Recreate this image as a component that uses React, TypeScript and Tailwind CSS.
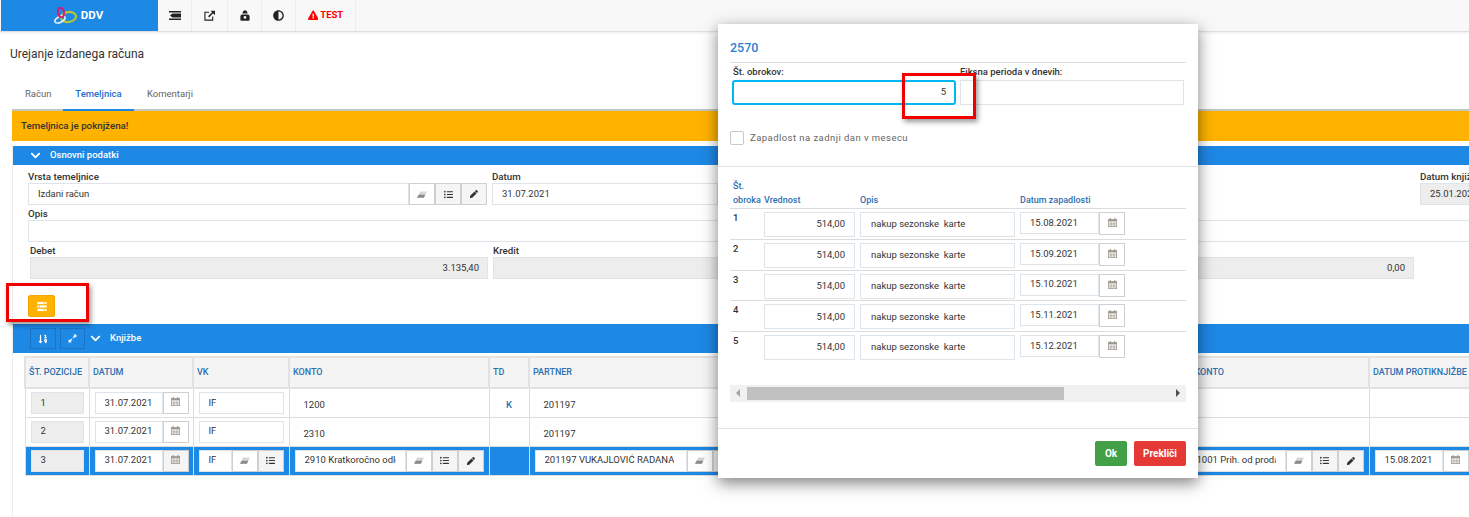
import React from 'react';
import {
  FaAdjust,
  FaChevronDown,
  FaExclamationTriangle,
  FaExpandAlt,
  FaListUl,
  FaPen,
  FaSortNumericDown,
} from 'react-icons/fa';

const Eraser = ({ className = '' }: { className?: string }) => (
  <svg viewBox="0 0 16 10" className={className} fill="currentColor">
    <path d="M5 0h11l-5 10H0z" opacity="0.35" />
    <path d="M2.8 5.5h10.4L11 10H0z" />
  </svg>
);

const Calendar = () => (
  <svg viewBox="0 0 12 12" className="w-[9px] h-[9px] mb-[2px]" fill="none" stroke="#9a958a">
    <rect x="0.5" y="2" width="11" height="9.5" strokeWidth="1" />
    <path d="M0.5 3.5h11" strokeWidth="2" />
    <path d="M4 5v6M8 5v6M1 7h10M1 9.2h10" strokeWidth="0.8" />
    <path d="M3 0v3M9 0v3" strokeWidth="1.4" />
  </svg>
);

const Logo = () => (
  <svg viewBox="0 0 24 17" className="w-[24px] h-[17px]" fill="none">
    <ellipse cx="15.5" cy="10" rx="7.5" ry="5" stroke="#b4c632" strokeWidth="2.2" transform="rotate(-8 15.5 10)" />
    <ellipse cx="7" cy="12.5" rx="5.5" ry="2.8" stroke="#e3f0fb" strokeWidth="1.6" transform="rotate(-28 7 12.5)" />
    <ellipse cx="8" cy="5.5" rx="3" ry="4.8" stroke="#d81b72" strokeWidth="2" transform="rotate(-10 8 5.5)" />
  </svg>
);

const Sliders = () => (
  <svg viewBox="0 0 12 12" className="w-[12px] h-[11px]" fill="#fff">
    <rect x="1" y="1" width="10" height="2.4" />
    <rect x="1" y="4.8" width="10" height="2.4" />
    <rect x="1" y="8.6" width="10" height="2.4" />
    <rect x="8" y="0.5" width="0.8" height="3" fill="#ffb300" />
    <rect x="3" y="4.5" width="0.8" height="3" fill="#ffb300" />
    <rect x="8" y="8.3" width="0.8" height="3" fill="#ffb300" />
  </svg>
);

const BarsIcon = () => (
  <svg viewBox="0 0 12 9" className="w-[12px] h-[9px]" fill="#222">
    <rect x="0" y="0" width="12" height="1.5" />
    <rect x="0" y="7.5" width="12" height="1.5" />
    <path d="M3.5 2.5H12v4H3.5L1 4.5z" />
  </svg>
);

const LinkIcon = () => (
  <svg viewBox="0 0 12 12" className="w-[11px] h-[11px]" fill="none" stroke="#222">
    <path d="M5.5 2.5H1v8.5h8.5V7" strokeWidth="1.2" />
    <path d="M5 7.5l5-5" strokeWidth="1.6" />
    <path d="M7.2 0.8H12V5.6z" fill="#222" stroke="none" />
  </svg>
);

const SafeIcon = () => (
  <svg viewBox="0 0 10 11" className="w-[10px] h-[11px]" fill="#222">
    <path d="M2.5 3.5C2.5 1 4 0.3 5 0.3s2.5 0.7 2.5 3.2z" />
    <path fillRule="evenodd" d="M2.2 4.4h5.6C9 4.4 9.6 5.4 9.6 6.6v3c0 .8-.5 1.2-1.2 1.2H1.6C.9 10.8.4 10.4.4 9.6v-3c0-1.2.6-2.2 1.8-2.2zM5 6a1.4 1.4 0 100 2.8A1.4 1.4 0 005 6z" />
  </svg>
);

const Addon = ({ children, bg = 'bg-[#f5f5f5]' }: { children: React.ReactNode; bg?: string }) => (
  <span className={`w-[26px] h-full shrink-0 flex items-center justify-center border border-[#cfcfcf] text-[#333] ${bg}`}>
    {children}
  </span>
);

const Tools = ({ pen = true }: { pen?: boolean }) => (
  <>
    <Addon bg="bg-white">
      <Eraser className="w-[10px] h-[7px] text-[#8a8a8a]" />
    </Addon>
    <Addon>
      <FaListUl className="text-[9px]" />
    </Addon>
    {pen && (
      <Addon>
        <FaPen className="text-[8px]" />
      </Addon>
    )}
  </>
);

const CalBtn = ({ bg = 'bg-white' }: { bg?: string }) => (
  <Addon bg={bg}>
    <Calendar />
  </Addon>
);

const Field = ({
  label,
  value,
  right,
  gray,
  className = '',
  children,
}: {
  label: string;
  value?: string;
  right?: boolean;
  gray?: boolean;
  className?: string;
  children?: React.ReactNode;
}) => (
  <div className={`flex flex-col ${className}`}>
    <label className="h-[14px] leading-[16px] text-[9.75px] font-medium text-[#333] whitespace-nowrap">{label}</label>
    <div className="flex h-[22px]">
      <div
        className={`flex-1 min-w-0 border border-[#dde4ea] flex items-center text-[9.5px] text-[#333] whitespace-nowrap overflow-hidden ${
          gray ? 'bg-[#ededed]' : 'bg-white'
        } ${right ? 'justify-end pr-2' : 'pl-[9px]'}`}
      >
        {value}
      </div>
      {children}
    </div>
  </div>
);

const GridInput = ({ value, gray, className = '' }: { value: string; gray?: boolean; className?: string }) => (
  <div
    className={`h-[22px] border border-[#dde4ea] flex items-center px-[9px] text-[9.5px] text-[#333] whitespace-nowrap ${
      gray ? 'bg-[#ededed]' : 'bg-white'
    } ${className}`}
  >
    <span className="block overflow-hidden">{value}</span>
  </div>
);

const DateCell = ({ value, bg }: { value: string; bg?: string }) => (
  <div className="flex h-[22px] w-[94px]">
    <GridInput value={value} className="flex-1 min-w-0" />
    <CalBtn bg={bg} />
  </div>
);

const Th = ({ children }: { children?: React.ReactNode }) => (
  <th className="border-2 border-[#e2e2e2] bg-[#f4f4f4] text-left px-[3px] text-[9px] font-medium text-[#2f6fb0] whitespace-nowrap">
    {children}
  </th>
);

const Td = ({ children, selected }: { children?: React.ReactNode; selected?: boolean }) => (
  <td className={`border border-[#dddddd] px-[5px] text-[9.5px] text-[#333] ${selected ? 'bg-[#1e88e5]' : 'bg-white'}`}>
    {children}
  </td>
);

const PlainRow = ({ n, konto, td }: { n: string; konto: string; td?: string }) => (
  <tr className="h-[29px]">
    <Td>
      <GridInput value={n} gray />
    </Td>
    <Td>
      <DateCell value="31.07.2021" />
    </Td>
    <Td>
      <GridInput value="IF" />
    </Td>
    <Td>
      <span className="block pl-[9px] pt-[5px]">{konto}</span>
    </Td>
    <Td>
      <span className="block text-center text-[#1e6fb8] font-medium pt-[5px]">{td}</span>
    </Td>
    <Td>
      <span className="block pl-[9px] pt-[5px]">201197</span>
    </Td>
    <Td />
    <Td />
    <Td />
  </tr>
);

const obroki = [
  { n: '1', d: '15.08.2021' },
  { n: '2', d: '15.09.2021' },
  { n: '3', d: '15.10.2021' },
  { n: '4', d: '15.11.2021' },
  { n: '5', d: '15.12.2021' },
];

const Modal = () => (
  <div className="absolute left-[718px] top-[24px] w-[480px] h-[454px] bg-white shadow-[0_5px_15px_rgba(0,0,0,0.5)] z-10 flex flex-col">
    <div className="px-3 pt-[16px] h-[142px] flex flex-col">
      <h4 className="text-[12.5px] leading-[16px] font-medium text-[#2a7fd6] h-[23px] border-b border-[#dcdcdc]">2570</h4>
      <div className="flex gap-[4px] pl-[2px] pr-[2px]">
        <div className="w-[224px]">
          <div className="h-[17px] pt-[2px] pl-[1px] text-[9.5px] leading-[14px] font-medium text-[#333]">Št. obrokov:</div>
          <div className="h-[25px] border-2 border-[#00b7f1] rounded-[3px] flex items-center justify-end pr-[8px] text-[9.5px] text-[#333]">
            5
          </div>
        </div>
        <div className="flex-1">
          <div className="h-[17px] pt-[2px] text-[9.5px] leading-[14px] font-medium text-[#333]">Fiksna perioda v dnevih:</div>
          <div className="h-[25px] border border-[#dde4ea]" />
        </div>
      </div>
      <div className="flex items-center gap-[6px] mt-[26px]">
        <span className="w-[14px] h-[14px] border border-[#c8c8c8] rounded-[2px]" />
        <span className="text-[9.5px] text-[#666] tracking-[0.45px]">Zapadlost na zadnji dan v mesecu</span>
      </div>
    </div>
    <div className="border-t border-[#e4e4e4] px-3 pt-[13px] h-[262px] flex flex-col">
      <div className="flex items-end h-[29px] pb-[1px] border-b border-[#dcdcdc] text-[9px] leading-[14px] font-medium text-[#2f6fb0]">
        <span className="w-[34px] pl-[3px]">
          Št.
          <br />
          obroka
        </span>
        <span className="w-[96px]">Vrednost</span>
        <span className="w-[160px]">Opis</span>
        <span>Datum zapadlosti</span>
      </div>
      {obroki.map((o, i) => (
        <div
          key={o.n}
          className={`flex h-[30.75px] pt-[3px] text-[9.5px] text-[#333] ${i < obroki.length - 1 ? 'border-b border-[#dcdcdc]' : ''}`}
        >
          <span className="w-[34px] pl-[3px] font-medium leading-[11px]">{o.n}</span>
          <div className="w-[91px] h-[25px] border border-[#dde4ea] flex items-center justify-end pr-[9px]">514,00</div>
          <div className="w-[155px] h-[25px] ml-[5px] border border-[#dde4ea] flex items-center pl-[10px] whitespace-pre">nakup sezonske  karte</div>
          <div className="flex ml-[5px] h-[23px]">
            <div className="w-[79px] h-[22px] border border-[#dde4ea] flex items-center pl-[9px]">{o.d}</div>
            <CalBtn />
          </div>
        </div>
      ))}
      <div className="mt-[22px] h-[17px] bg-[#f1f1f1] flex items-center relative shrink-0">
        <span className="w-0 h-0 ml-[6px] border-y-[4px] border-y-transparent border-r-[4px] border-r-[#a3a3a3]" />
        <span className="ml-[7px] w-[317px] h-[13px] bg-[#c1c1c1]" />
        <span className="w-0 h-0 ml-auto mr-[6px] border-y-[4px] border-y-transparent border-l-[4px] border-l-[#505050]" />
      </div>
    </div>
    <div className="border-t border-[#e4e4e4] flex-1 flex items-start justify-end gap-[7px] pr-3 pt-[12px]">
      <button className="w-[32px] h-[25px] rounded-[2px] bg-[#43a047] text-white text-[10px] font-bold">Ok</button>
      <button className="w-[52px] h-[25px] rounded-[2px] bg-[#e53935] text-white text-[10px] font-bold">Prekliči</button>
    </div>
  </div>
);

const RedBox = ({ className }: { className: string }) => (
  <div className={`absolute border-[3px] border-[#f00000] shadow-[2px_3px_5px_rgba(0,0,0,0.4)] z-20 ${className}`} />
);

export default function App() {
  return (
    <div className="relative w-[1469px] h-[517px] overflow-hidden bg-white font-['Roboto',sans-serif]">
      <header className="flex h-[32px] bg-[#f8f8f8] border-b border-[#dedede] shadow-[0_1px_2px_rgba(0,0,0,0.08)]">
        <div className="ml-[1px] w-[157px] bg-[#1e88e5] flex items-center justify-center gap-[4px] pr-[3px] text-white text-[11.5px] font-bold">
          <Logo />
          DDV
        </div>
        <div className="w-[34px] flex items-center justify-center border-r border-[#ececec]">
          <BarsIcon />
        </div>
        <div className="w-[36px] flex items-center justify-center border-r border-[#ececec]">
          <LinkIcon />
        </div>
        <div className="w-[34px] flex items-center justify-center border-r border-[#ececec]">
          <SafeIcon />
        </div>
        <div className="w-[34px] flex items-center justify-center border-r border-[#ececec]">
          <FaAdjust className="text-[11px] text-[#222]" />
        </div>
        <div className="w-[60px] flex items-center justify-center gap-[2px] border-r border-[#ececec] text-[9.5px] font-bold text-[#ff0000]">
          <FaExclamationTriangle className="text-[10.5px]" />
          TEST
        </div>
      </header>

      <h1 className="pl-[10px] pt-[15px] h-[31px] text-[12px] leading-[15px] text-[#333]">Urejanje izdanega računa</h1>

      <nav className="ml-[12px] mt-[15px] flex h-[33px] border-b-2 border-[#c4c4c4] text-[9.5px] text-[#666]">
        <span className="ml-[13px] w-[38px] pt-[9px]">Račun</span>
        <span className="w-[71px] h-[33px] text-center pt-[9px] font-medium text-[#1e6fcf] border-b-2 border-[#1e88e5]">Temeljnica</span>
        <span className="ml-[13px] pt-[9px]">Komentarji</span>
      </nav>

      <div className="ml-[12px] h-[30px] bg-[#ffb300] flex items-center pl-[9px] text-[9.75px] font-medium text-[#333]">
        Temeljnica je poknjžena!
      </div>

      <div className="ml-[12px] border-l border-[#ececec] min-h-[372px]">
        <div className="mt-[5px] h-[19px] bg-[#1e88e5] flex items-center pl-[17px] gap-[9px] text-white text-[9.5px] font-medium">
          <FaChevronDown className="text-[11px]" />
          <span>Osnovni podatki</span>
        </div>

        <div className="pl-[15px] pt-[4px] w-[1500px]">
          <div className="flex h-[36px]">
            <Field label="Vrsta temeljnice" value="Izdani račun" className="w-[459px]">
              <Tools />
            </Field>
            <Field label="Datum" value="31.07.2021" className="ml-[5px] w-[226px]" />
            <Field label="Datum knjiženja" value="25.01.2021" gray className="ml-[702px] w-[90px]" />
          </div>
          <div className="h-[37px] pt-[1px]">
            <Field label="Opis" className="w-[1460px]" />
          </div>
          <div className="flex pl-[2px] pt-[1px]">
            <Field label="Debet" value="3.135,40" right gray className="w-[458px]" />
            <Field label="Kredit" gray className="ml-[5px] w-[250px]" />
            <Field label="" value="0,00" right gray className="w-[671px]" />
          </div>
          <button className="mt-[16px] w-[27px] h-[22px] rounded-[2px] bg-[#ffb300] border border-[#f0a800] flex items-center justify-center">
            <Sliders />
          </button>
        </div>

        <div className="mt-[7px] h-[29px] bg-[#1e88e5] flex items-center pl-[17px] text-white text-[9.5px] font-medium">
          <span className="w-[26px] h-[21px] border border-[#1a73c4] flex items-center justify-center">
            <FaSortNumericDown className="text-[10px]" />
          </span>
          <span className="ml-[4px] w-[25px] h-[21px] border border-[#1a73c4] flex items-center justify-center">
            <FaExpandAlt className="text-[9px]" />
          </span>
          <FaChevronDown className="ml-[5px] text-[11px]" />
          <span className="ml-[9px]">Knjižbe</span>
        </div>

        <div className="pl-[11px] pt-[3px]">
          <table className="table-fixed border-collapse w-[1460px]">
            <colgroup>
              <col className="w-[64px]" />
              <col className="w-[104px]" />
              <col className="w-[96px]" />
              <col className="w-[200px]" />
              <col className="w-[40px]" />
              <col className="w-[241px]" />
              <col className="w-[395px]" />
              <col className="w-[204px]" />
              <col className="w-[116px]" />
            </colgroup>
            <thead>
              <tr className="h-[31px]">
                <Th>ŠT. POZICIJE</Th>
                <Th>DATUM</Th>
                <Th>VK</Th>
                <Th>KONTO</Th>
                <Th>TD</Th>
                <Th>PARTNER</Th>
                <Th />
                <Th>PROTIKONTO</Th>
                <Th>DATUM PROTIKNJIŽBE</Th>
              </tr>
            </thead>
            <tbody>
              <PlainRow n="1" konto="1200" td="K" />
              <PlainRow n="2" konto="2310" />
              <tr className="h-[29px]">
                <Td selected>
                  <GridInput value="3" gray />
                </Td>
                <Td selected>
                  <DateCell value="31.07.2021" bg="bg-[#f5f5f5]" />
                </Td>
                <Td selected>
                  <div className="flex h-[22px]">
                    <GridInput value="IF" className="flex-1 min-w-0" />
                    <Tools pen={false} />
                  </div>
                </Td>
                <Td selected>
                  <div className="flex h-[22px]">
                    <GridInput value="2910 Kratkoročno odložene obveznosti" className="flex-1 min-w-0" />
                    <Tools />
                  </div>
                </Td>
                <Td selected />
                <Td selected>
                  <div className="flex h-[22px]">
                    <GridInput value="201197 VUKAJLOVIĆ RADANA" className="flex-1 min-w-0" />
                    <Tools />
                  </div>
                </Td>
                <Td selected />
                <Td selected>
                  <div className="flex h-[22px]">
                    <GridInput value="7601001 Prih. od prodaje" className="flex-1 min-w-0" />
                    <Tools />
                  </div>
                </Td>
                <Td selected>
                  <DateCell value="15.08.2021" />
                </Td>
              </tr>
            </tbody>
          </table>
        </div>
      </div>

      <Modal />
      <RedBox className="left-[6px] top-[283px] w-[83px] h-[39px]" />
      <RedBox className="left-[902px] top-[73px] w-[74px] h-[46px]" />
    </div>
  );
}
